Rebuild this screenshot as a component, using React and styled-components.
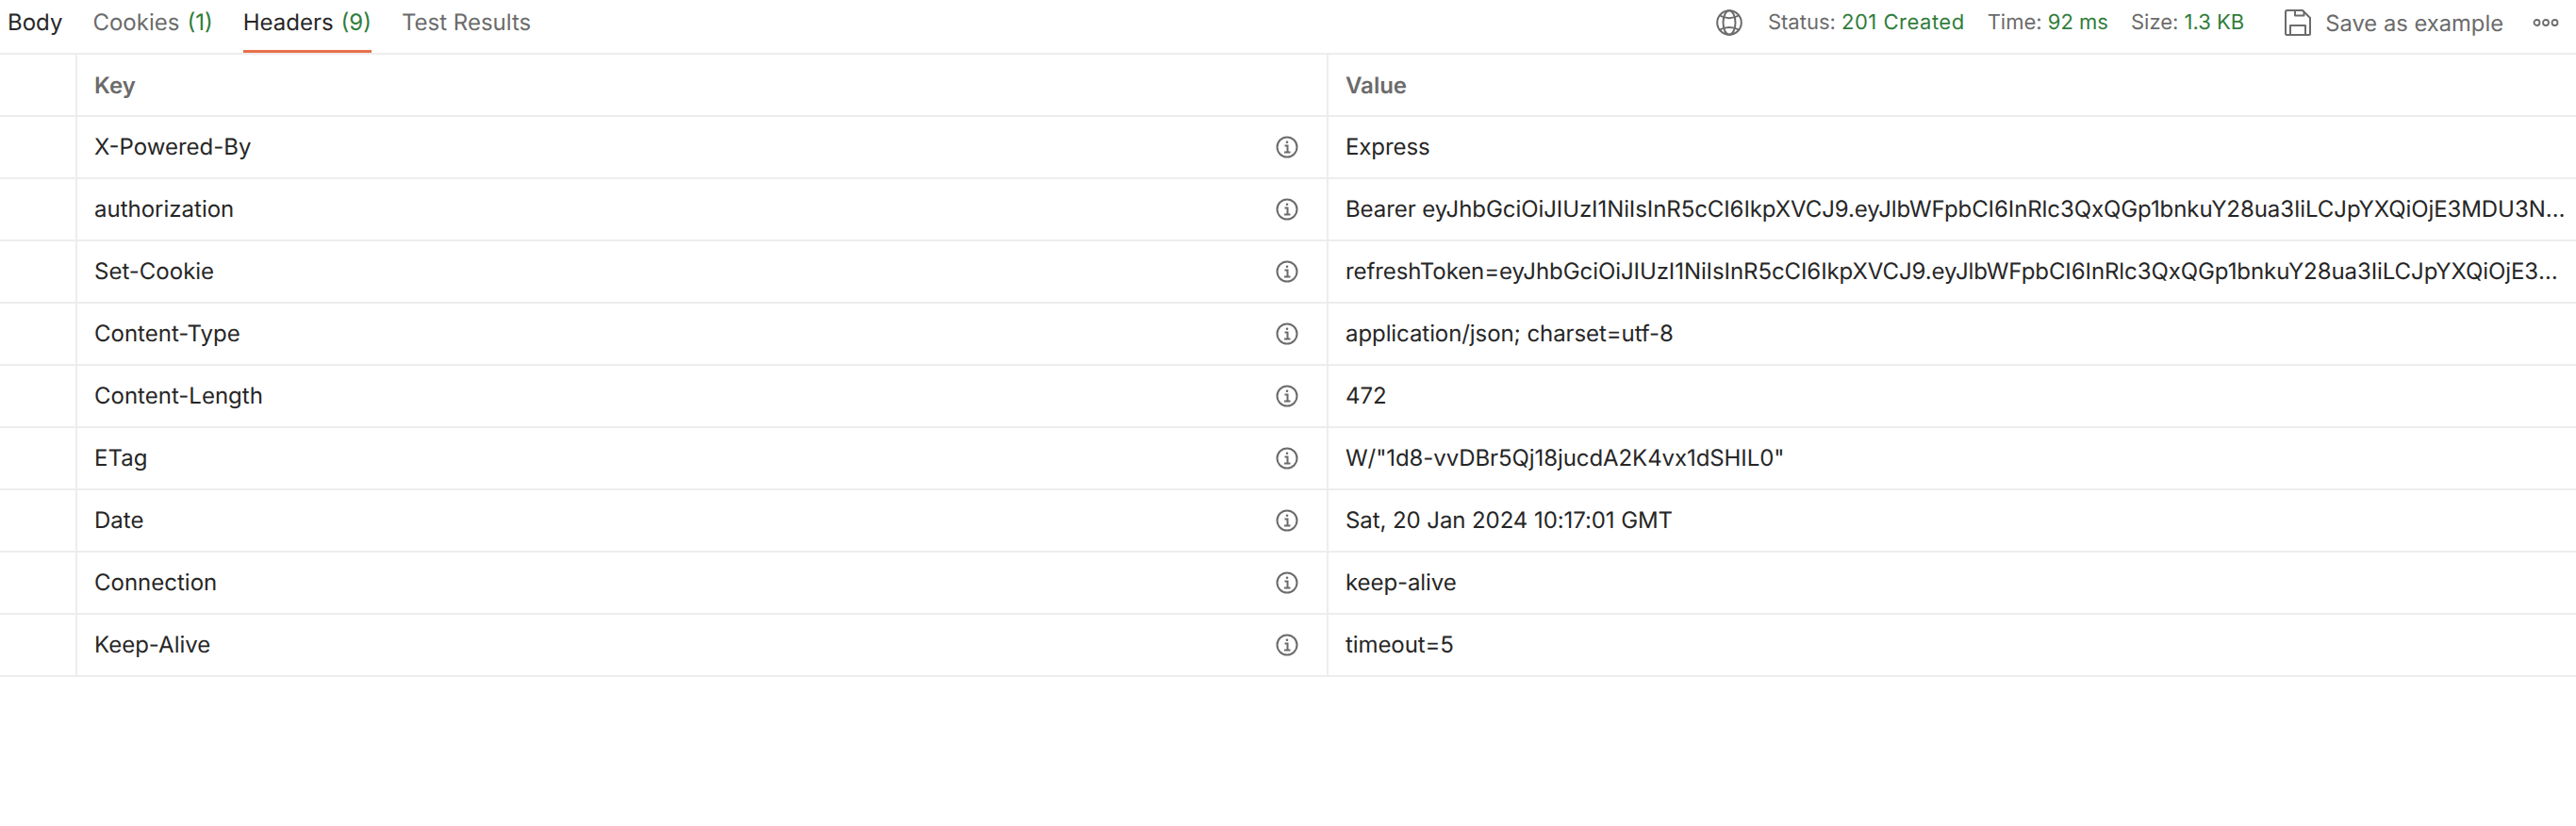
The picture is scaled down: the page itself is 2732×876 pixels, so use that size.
import React from 'react';
import styled, { createGlobalStyle } from 'styled-components';

const Global = createGlobalStyle`
  html, body { margin: 0; padding: 0; background: #fff; }
  body {
    font-family: Inter, "Noto Sans", sans-serif;
    color: #262626;
    text-rendering: geometricPrecision;
  }
`;

const Page = styled.div`
  width: 2732px;
  height: 876px;
  overflow: hidden;
`;

const TabBar = styled.div`
  display: flex;
  justify-content: space-between;
  height: 56px;
  border-bottom: 2px solid #ededed;
`;

const Tabs = styled.div`
  display: flex;
  gap: 32px;
  padding-left: 8px;
`;

const Tab = styled.div`
  position: relative;
  height: 56px;
  line-height: 47px;
  font-size: 24px;
  color: ${p => (p.$active ? '#262626' : '#6b6b6b')};
  ${p => p.$underline && `box-shadow: inset 0 -3px 0 #e8704a;`}
`;

const Count = styled.span`
  color: #2f7d3b;
  margin-left: 8px;
`;

const Meta = styled.div`
  display: flex;
  align-items: center;
  height: 48px;
  padding-right: 18px;
  font-size: 22px;
  color: #6b6b6b;
`;

const MetaItem = styled.span`
  margin-left: ${p => p.$gap || 24}px;
  font-size: ${p => p.$size || 22}px;
`;

const Good = styled.span`
  color: #2f7d3b;
  letter-spacing: ${p => (p.$wide ? '0.5px' : 'normal')};
`;

const Icon = styled.svg`
  display: block;
  flex: none;
  margin-left: ${p => p.$gap || 0}px;
`;

const Row = styled.div`
  display: grid;
  grid-template-columns: 80px 1327px 1fr;
  height: 64px;
  border-bottom: 2px solid #ededed;
  font-size: 24px;
  font-weight: ${p => (p.$head ? 600 : 400)};
  color: ${p => (p.$head ? '#6b6b6b' : '#262626')};
`;

const Cell = styled.div`
  display: flex;
  align-items: center;
  min-width: 0;
  padding: 0 ${p => p.$right || 18}px 0 18px;
  border-left: ${p => (p.$first ? 'none' : '2px solid #ededed')};
  white-space: nowrap;
`;

const KeyText = styled.span`
  flex: 1;
  margin-bottom: 2px;
`;

const ValueText = styled.span`
  overflow: hidden;
  text-overflow: ellipsis;
  margin-bottom: 2px;
  letter-spacing: -0.08px;
`;

const rows = [
  ['X-Powered-By', 'Express'],
  ['authorization', 'Bearer eyJhbGciOiJIUzI1NiIsInR5cCI6IkpXVCJ9.eyJlbWFpbCI6InRlc3QxQGp1bnkuY28ua3IiLCJpYXQiOjE3MDU3NDM4MjEsImV4cCI6MTcwNTc0NzQyMX0'],
  ['Set-Cookie', 'refreshToken=eyJhbGciOiJIUzI1NiIsInR5cCI6IkpXVCJ9.eyJlbWFpbCI6InRlc3QxQGp1bnkuY28ua3IiLCJpYXQiOjE3MDU3NDM4MjEsImV4cCI6MTcwNTc0NzQyMX0'],
  ['Content-Type', 'application/json; charset=utf-8'],
  ['Content-Length', '472'],
  ['ETag', 'W/"1d8-vvDBr5Qj18jucdA2K4vx1dSHIL0"'],
  ['Date', 'Sat, 20 Jan 2024 10:17:01 GMT'],
  ['Connection', 'keep-alive'],
  ['Keep-Alive', 'timeout=5'],
];

const InfoIcon = () => (
  <Icon width="24" height="24" viewBox="0 0 24 24" fill="none" stroke="#6b6b6b" strokeWidth="2">
    <circle cx="12" cy="12" r="10.5" />
    <path d="M9.5 10.5H12.5V17M9 17.5H15.5" />
    <circle cx="12" cy="6.8" r="1.3" fill="#6b6b6b" stroke="none" />
  </Icon>
);

const GlobeIcon = () => (
  <Icon width="28" height="28" viewBox="0 0 28 28" fill="none" stroke="#6b6b6b" strokeWidth="2">
    <circle cx="14" cy="14" r="12.8" />
    <ellipse cx="14" cy="14" rx="6.5" ry="12.8" />
    <path d="M4 6.5C10 10 18 10 24 6.5M4 21.5C10 18 18 18 24 21.5" />
  </Icon>
);

const SaveIcon = () => (
  <Icon $gap={43} width="28" height="28" viewBox="0 0 28 28" fill="none" stroke="#6b6b6b" strokeWidth="2" strokeLinejoin="round">
    <path d="M1 2.5Q1 1 2.5 1H19L27 9V25.5Q27 27 25.5 27H2.5Q1 27 1 25.5Z" />
    <path d="M11 1V6.5H20.5V2M6 27V17H22V27" />
  </Icon>
);

const MoreIcon = () => (
  <Icon $gap={31} width="28" height="10" viewBox="0 0 28 10" fill="none" stroke="#6b6b6b" strokeWidth="1.8">
    <circle cx="4.5" cy="5" r="3" />
    <circle cx="14" cy="5" r="3" />
    <circle cx="23.5" cy="5" r="3" />
  </Icon>
);

export default function App() {
  return (
    <Page>
      <Global />
      <TabBar>
        <Tabs>
          <Tab $active>Body</Tab>
          <Tab>Cookies<Count>(1)</Count></Tab>
          <Tab $active $underline>Headers<Count>(9)</Count></Tab>
          <Tab>Test Results</Tab>
        </Tabs>
        <Meta>
          <GlobeIcon />
          <MetaItem $gap={27}>Status: <Good $wide>201 Created</Good></MetaItem>
          <MetaItem>Time: <Good>92 ms</Good></MetaItem>
          <MetaItem>Size: <Good>1.3 KB</Good></MetaItem>
          <SaveIcon />
          <MetaItem $gap={15} $size={23.75}>Save as example</MetaItem>
          <MoreIcon />
        </Meta>
      </TabBar>
      <Row $head>
        <Cell $first />
        <Cell>Key</Cell>
        <Cell>Value</Cell>
      </Row>
      {rows.map(([k, v]) => (
        <Row key={k}>
          <Cell $first />
          <Cell $right={30}><KeyText>{k}</KeyText><InfoIcon /></Cell>
          <Cell $right={7}><ValueText>{v}</ValueText></Cell>
        </Row>
      ))}
    </Page>
  );
}
